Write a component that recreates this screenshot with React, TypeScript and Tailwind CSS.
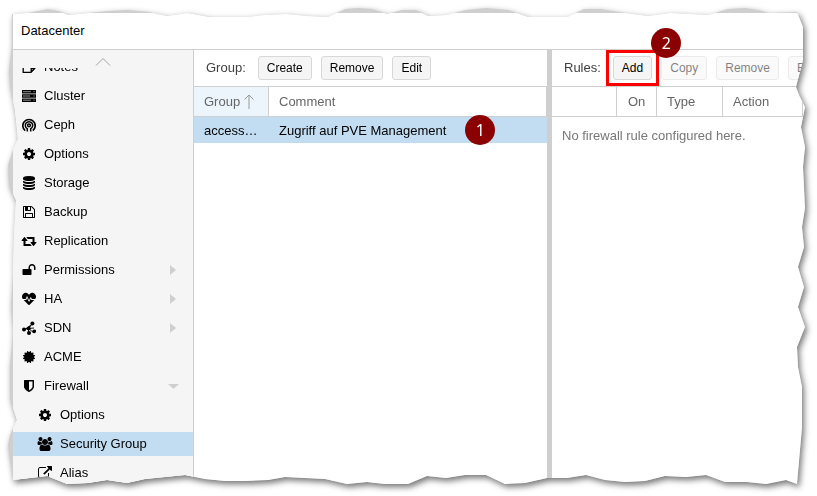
import React from 'react'
import { FaHeartbeat } from 'react-icons/fa'

type Point = [number, number]

// outline of the torn sheet, drawn on an 817 x 496 grid and scaled to the window
const tornEdge: Point[] = [
  [12, 14], [28, 13], [38, 11], [48, 9], [58, 11], [68, 15], [88, 13], [108, 11], [128, 10], [148, 12],
  [167, 16], [187, 13], [209, 17], [246, 17], [264, 15], [286, 14], [308, 16], [328, 17], [345, 9],
  [358, 8], [372, 9], [387, 14], [402, 10], [416, 10], [428, 16], [446, 15], [466, 10], [486, 8],
  [508, 10], [528, 17], [567, 17], [584, 9], [600, 9], [625, 13], [648, 16], [670, 13], [690, 14],
  [708, 15], [728, 9], [745, 8], [758, 10], [768, 13], [797, 12],
  [803, 27], [803, 60], [796, 87], [799, 95], [805, 107], [801, 127], [805, 147], [803, 167],
  [805, 208], [802, 227], [804, 247], [798, 267], [804, 287], [798, 307], [805, 327], [797, 347],
  [798, 367], [802, 387], [802, 427], [797, 484],
  [786, 480], [766, 484], [747, 482], [725, 482], [706, 475], [686, 477], [665, 476], [645, 481],
  [625, 482], [605, 480], [586, 475], [567, 478], [547, 478], [525, 483], [505, 484], [486, 475],
  [465, 475], [446, 478], [427, 476], [408, 484], [385, 484], [367, 482], [347, 484], [325, 479],
  [305, 478], [285, 477], [268, 480], [245, 481], [225, 481], [205, 479], [185, 475], [165, 477],
  [145, 479], [127, 483], [107, 480], [88, 483], [67, 484], [47, 476], [30, 478], [13, 480],
  [11, 465], [8, 445], [10, 435], [17, 420], [10, 398], [10, 365], [12, 345], [13, 330], [11, 305],
  [13, 275], [14, 235], [16, 200], [9, 185], [8, 165], [13, 150], [18, 139], [15, 110], [10, 85],
  [9, 70], [12, 45],
]

const sheetClip = `polygon(${tornEdge
  .map(([x, y]) => `${(x / 817) * 100}% ${(y / 496) * 100}%`)
  .join(', ')})`

const paths = {
  cog: 'M1152 896q0-106-75-181t-181-75-181 75-75 181 75 181 181 75 181-75 75-181zm512-109v222q0 12-8 23t-20 13l-185 28q-19 54-39 91 35 50 107 138 10 12 10 25t-9 23q-27 37-99 108t-94 71q-12 0-26-9l-138-108q-44 23-91 38-16 136-29 186-7 28-36 28h-222q-14 0-24.500-8.500t-11.500-21.500l-28-184q-49-16-90-37l-141 107q-10 9-25 9-14 0-25-11-126-114-165-168-7-10-7-23 0-12 8-23 15-21 51-66.500t54-70.500q-27-50-41-99l-183-27q-13-2-21-12.500t-8-23.500v-222q0-12 8-23t19-13l186-28q14-46 39-92-40-57-107-138-10-12-10-24 0-10 9-23 26-36 98.500-107.500t94.500-71.500q13 0 26 10l138 107q44-23 91-38 16-136 29-186 7-28 36-28h222q14 0 24.500 8.500t11.500 21.500l28 184q49 16 90 37l142-107q9-9 24-9 13 0 25 10 129 119 165 170 7 8 7 22 0 12-8 23-15 21-51 66.500t-54 70.500q26 50 41 98l183 28q13 2 21 12.500t8 23.500z',
  floppy: 'M512 1536h768v-384h-768v384zm896 0h128v-896q0-14-10-38.500t-20-34.500l-281-281q-10-10-34-20t-39-10v416q0 40-28 68t-68 28h-576q-40 0-68-28t-28-68v-416h-128v1280h128v-416q0-40 28-68t68-28h832q40 0 68 28t28 68v416zm-384-928v-320q0-13-9.500-22.500t-22.500-9.500h-192q-13 0-22.500 9.500t-9.500 22.500v320q0 13 9.500 22.500t22.500 9.500h192q13 0 22.500-9.500t9.500-22.500zm640 32v928q0 40-28 68t-68 28h-1344q-40 0-68-28t-28-68v-1344q0-40 28-68t68-28h928q40 0 88 20t76 48l280 280q28 28 48 76t20 88z',
  database: 'M896 768q237 0 443-43t325-127v170q0 69-103 128t-280 93.500-385 34.500-385-34.500-280-93.500-103-128v-170q119 84 325 127t443 43zm0 768q237 0 443-43t325-127v170q0 69-103 128t-280 93.500-385 34.500-385-34.500-280-93.500-103-128v-170q119 84 325 127t443 43zm0-384q237 0 443-43t325-127v170q0 69-103 128t-280 93.500-385 34.500-385-34.500-280-93.500-103-128v-170q119 84 325 127t443 43zm0-1152q208 0 385 34.500t280 93.500 103 128v128q0 69-103 128t-280 93.500-385 34.500-385-34.500-280-93.500-103-128v-128q0-69 103-128t280-93.500 385-34.500z',
  unlock: 'M1728 576v256q0 26-19 45t-45 19h-64q-26 0-45-19t-19-45v-256q0-106-75-181t-181-75-181 75-75 181v192h96q40 0 68 28t28 68v576q0 40-28 68t-68 28h-960q-40 0-68-28t-28-68v-576q0-40 28-68t68-28h672v-192q0-185 131.500-316.500t316.500-131.500 316.500 131.500 131.500 316.500z',
  retweet: 'M1344 1504q0 13-9.500 22.500t-22.500 9.500h-960q-8 0-13.500-2t-9-7-5.500-8-3-11.500-1-11.500v-600h-192q-26 0-45-19t-19-45q0-24 15-41l320-384q19-22 49-22t49 22l320 384q15 17 15 41 0 26-19 45t-45 19h-192v384h576q16 0 25 11l160 192q7 10 7 21zm640-416q0 24-15 41l-320 384q-20 23-49 23t-49-23l-320-384q-15-17-15-41 0-26 19-45t45-19h192v-384h-576q-16 0-25-12l-160-192q-7-9-7-20 0-13 9.500-22.500t22.500-9.500h960q8 0 13.500 2t9 7 5.500 8 3 11.500 1 11.500v600h192q26 0 45 19t19 45z',
  shield: 'M1344 960v-640h-448v1137q119-63 213-137 235-184 235-360zm192-768v768q0 86-33.500 170.500t-83 150-118 127.500-126.500 103-121 77.500-89.500 49.500-42.500 20q-12 6-26 6t-26-6q-16-7-42.500-20t-89.500-49.500-121-77.500-126.500-103-118-127.500-83-150-33.500-170.500v-768q0-26 19-45t45-19h1152q26 0 45 19t19 45z',
  certificate: 'M1504 896l138 135q30 28 20 70-12 41-52 51l-188 48 53 186q12 41-19 70-29 31-70 19l-186-53-48 188q-10 40-51 52-12 2-19 2-31 0-51-22l-135-138-135 138q-28 30-70 20-41-11-51-52l-48-188-186 53q-41 12-70-19-31-29-19-70l53-186-188-48q-40-10-52-51-10-42 20-70l138-135-138-135q-30-28-20-70 12-41 52-51l188-48-53-186q-12-41 19-70 29-31 70-19l186 53 48-188q10-41 51-51 41-12 70 19l135 139 135-139q29-30 70-19 41 10 51 51l48 188 186-53q41-12 70 19 31 29 19 70l-53 186 188 48q40 10 52 51 10 42-20 70z',
  external: 'M1408 928v320q0 119-84.500 203.500t-203.500 84.500h-832q-119 0-203.500-84.500t-84.500-203.500v-832q0-119 84.500-203.500t203.500-84.500h704q14 0 23 9t9 23v64q0 14-9 23t-23 9h-704q-66 0-113 47t-47 113v832q0 66 47 113t113 47h832q66 0 113-47t47-113v-320q0-14 9-23t23-9h64q14 0 23 9t9 23zm384-864v512q0 26-19 45t-45 19-45-19l-176-176-652 652q-10 10-23 10t-23-10l-114-114q-10-10-10-23t10-23l652-652-176-176q-19-19-19-45t19-45 45-19h512q26 0 45 19t19 45z',
  users: 'M657 896q-162 5-265 128h-134q-82 0-138-40.500t-56-118.500q0-353 124-353 6 0 43.500 21t97.500 42.500 119 21.500q67 0 133-23-5 37-5 66 0 139 81 256zm1071 637q0 120-73 189.500t-194 69.500h-874q-121 0-194-69.500t-73-189.500q0-53 3.500-103.500t14-109 26.500-108.500 43-97.500 62-81 85.500-53.500 111.500-20q10 0 43 21.500t73 48 107 48 135 21.500 135-21.500 107-48 73-48 43-21.500q61 0 111.500 20t85.500 53.500 62 81 43 97.500 26.500 108.500 14 109 3.500 103.500zm-1024-1277q0 106-75 181t-181 75-181-75-75-181 75-181 181-75 181 75 75 181zm704 384q0 159-112.500 271.500t-271.500 112.500-271.500-112.500-112.500-271.500 112.500-271.500 271.500-112.500 271.500 112.500 112.500 271.500zm576 225q0 78-56 118.500t-138 40.500h-134q-103-123-265-128 81-117 81-256 0-29-5-66 66 23 133 23 59 0 119-21.500t97.500-42.500 43.500-21q124 0 124 353zm-128-609q0 106-75 181t-181 75-181-75-75-181 75-181 181-75 181 75 75 181z',
}

const Glyph: React.FC<{ d: string; wide?: boolean }> = ({ d, wide }) => (
  <svg
    viewBox={wide ? '0 0 2048 1792' : '0 0 1792 1792'}
    className={wide ? 'w-4 h-3.5' : 'w-3.5 h-3.5'}
    fill="currentColor"
    aria-hidden="true"
  >
    <path d={d} />
  </svg>
)

const NoteIcon = () => (
  <svg viewBox="0 0 14 14" className="w-3.5 h-3.5" fill="none" stroke="currentColor" strokeWidth="1.3" aria-hidden="true">
    <path d="M1.200 1.700h11.600v6.800l-3.800 3.800H1.200z M12.800 8.700H9.200v3.500" />
  </svg>
)

const ServerIcon = () => (
  <svg viewBox="0 0 14 12" className="w-3.5 h-3" aria-hidden="true">
    <path d="M0 0h14v3.400H0zM0 4.200h14v3.500H0zM0 8.500h14v3.500H0z" fill="currentColor" />
    <path d="M1 1.700h8M11.500 1.700h1.200M1 6h7M11.500 6h1.200M1 10.200h8M11.500 10.200h1.200" stroke="#f5f5f5" strokeWidth="0.600" />
  </svg>
)

const CephIcon = () => (
  <svg viewBox="0 0 14 14" className="w-3.5 h-3.5" fill="none" stroke="currentColor" aria-hidden="true">
    <path d="M3.200 12.600A6.200 6.200 0 1 1 10.800 12.600" strokeWidth="1.700" />
    <path d="M5.300 13.600v-2.900A3.700 3.700 0 1 1 8.700 10.700v2.900" strokeWidth="1.500" />
    <circle cx="7" cy="7.300" r="1.400" strokeWidth="1.500" />
  </svg>
)

const SdnIcon = () => (
  <svg viewBox="0 0 14 14" className="w-3.5 h-3.5" fill="currentColor" stroke="currentColor" aria-hidden="true">
    <path d="M2 8.500L6.500 7.500L10.500 2.500M6.500 7.500L12 7M6.500 7.500L11.500 11.500M6.500 7.500v5" strokeWidth="0.900" />
    <g stroke="none">
      <circle cx="2" cy="8.400" r="2" />
      <circle cx="6.700" cy="7.400" r="2" />
      <circle cx="10.400" cy="2.400" r="2" />
      <circle cx="12.200" cy="10.300" r="1.900" />
      <circle cx="7" cy="12" r="2" />
    </g>
  </svg>
)

interface NavItem {
  label: string
  icon: React.ReactNode
  child?: boolean
  arrow?: 'right' | 'down'
  active?: boolean
}

const navItems: NavItem[] = [
  { label: 'Notes', icon: <NoteIcon /> },
  { label: 'Cluster', icon: <ServerIcon /> },
  { label: 'Ceph', icon: <CephIcon /> },
  { label: 'Options', icon: <Glyph d={paths.cog} /> },
  { label: 'Storage', icon: <Glyph d={paths.database} /> },
  { label: 'Backup', icon: <Glyph d={paths.floppy} /> },
  { label: 'Replication', icon: <Glyph d={paths.retweet} wide /> },
  { label: 'Permissions', icon: <Glyph d={paths.unlock} />, arrow: 'right' },
  { label: 'HA', icon: <FaHeartbeat className="w-3.5 h-3.5" />, arrow: 'right' },
  { label: 'SDN', icon: <SdnIcon />, arrow: 'right' },
  { label: 'ACME', icon: <Glyph d={paths.certificate} /> },
  { label: 'Firewall', icon: <Glyph d={paths.shield} />, arrow: 'down' },
  { label: 'Options', icon: <Glyph d={paths.cog} />, child: true },
  { label: 'Security Group', icon: <Glyph d={paths.users} wide />, child: true, active: true },
  { label: 'Alias', icon: <Glyph d={paths.external} />, child: true },
]

const Arrow: React.FC<{ dir: 'right' | 'down' }> = ({ dir }) => (
  <svg viewBox="0 0 12 12" className="w-3 h-3 ml-auto text-[#cfcfcf]" fill="currentColor" aria-hidden="true">
    {dir === 'right' ? <path d="M3 1l6 5-6 5z" /> : <path d="M1 4h11l-5.500 5z" />}
  </svg>
)

const Sidebar: React.FC = () => (
  <nav aria-label="Datacenter" className="w-[181px] shrink-0 bg-[#f5f5f5] border-r border-[#cfcfcf] flex flex-col">
    <button type="button" aria-label="Scroll up" className="h-[18px] w-full flex justify-center items-end pb-0.5">
      <svg viewBox="0 0 16 9" className="w-4 h-[9px] text-[#a0a0a0]" fill="none" stroke="currentColor" aria-hidden="true">
        <path d="M1 8.500l7-7 7 7" />
      </svg>
    </button>
    {/* the list is scrolled down a little, so its first row is partly hidden */}
    <div className="overflow-hidden">
      <ul className="-mt-[13px] flex flex-col gap-[5px]">
        {navItems.map((item, i) => (
          <li key={i}>
            <a
              href="#"
              className={`h-6 flex items-center pr-3.5 ${item.child ? 'pl-6' : 'pl-2'} ${item.active ? 'bg-[#c2ddf2]' : ''}`}
            >
              <span className="w-4 mr-[7px] flex justify-center">{item.icon}</span>
              <span>{item.label}</span>
              {item.arrow && <Arrow dir={item.arrow} />}
            </a>
          </li>
        ))}
      </ul>
    </div>
  </nav>
)

const ToolButton: React.FC<{ label: string; disabled?: boolean }> = ({ label, disabled }) => (
  <button
    type="button"
    disabled={disabled}
    className="h-6 px-2 shrink-0 border border-[#d8d8d8] rounded-[3px] bg-[#f5f5f5] text-xs text-black disabled:opacity-50"
  >
    {label}
  </button>
)

const Badge: React.FC<{ n: number; place: string }> = ({ n, place }) => (
  <span
    className={`absolute ${place} z-10 w-[30px] h-[30px] rounded-full bg-[#8b0000] text-white text-base font-['Noto_Sans',sans-serif] flex items-center justify-center`}
  >
    {n}
  </span>
)

const GroupPanel: React.FC = () => (
  <section className="flex-[353_1_0] min-w-0">
    <div className="h-[37px] pl-3 flex items-center gap-[9px] border-b border-[#cfcfcf]">
      <span className="mr-[3px] text-[#404040]">Group:</span>
      <ToolButton label="Create" />
      <ToolButton label="Remove" />
      <ToolButton label="Edit" />
    </div>
    <table className="w-full table-fixed border-separate border-spacing-0 text-left">
      <thead>
        <tr className="h-[30px] text-[#666]">
          <th scope="col" aria-sort="ascending" className="w-[75px] pl-2.5 font-normal bg-[#ecf5fc] border-r border-b border-[#cfcfcf]">
            <span className="flex items-center gap-1">
              Group
              <svg viewBox="0 0 10 15" className="w-2.5 h-[15px] text-[#999]" fill="none" stroke="currentColor" aria-hidden="true">
                <path d="M5 15V1M.500 5.500L5 1l4.500 4.500" />
              </svg>
            </span>
          </th>
          <th scope="col" className="pl-2.5 font-normal border-r border-b border-[#cfcfcf]">Comment</th>
        </tr>
      </thead>
      <tbody>
        <tr className="h-[26px] bg-[#c2ddf2]">
          <td className="pl-2.5 pt-0.5">access…</td>
          <td className="pl-2.5 pt-0.5">
            <span className="relative whitespace-nowrap">
              Zugriff auf PVE Management
              <Badge n={1} place="left-full ml-[19px] -top-2" />
            </span>
          </td>
        </tr>
      </tbody>
    </table>
  </section>
)

const RulesPanel: React.FC = () => (
  <section className="flex-[265_1_0] min-w-0">
    <div className="h-[37px] pl-3 flex items-center gap-[9px] border-b border-[#cfcfcf]">
      <span className="mr-[3px] text-[#404040]">Rules:</span>
      <span className="relative flex shrink-0">
        <ToolButton label="Add" />
        <span className="absolute -inset-x-[7px] -inset-y-[6px] border-3 border-[#f00] pointer-events-none" />
        <Badge n={2} place="left-full -ml-px -top-7" />
      </span>
      <ToolButton label="Copy" disabled />
      <ToolButton label="Remove" disabled />
      <ToolButton label="Edit" disabled />
    </div>
    <table className="w-full table-fixed border-separate border-spacing-0 text-left">
      <thead>
        <tr className="h-[30px] text-[#666]">
          <th className="w-[65px] border-r border-b border-[#cfcfcf]" />
          <th scope="col" className="w-10 pl-[11px] font-normal border-r border-b border-[#cfcfcf]">On</th>
          <th scope="col" className="w-[66px] pl-2.5 font-normal border-r border-b border-[#cfcfcf]">Type</th>
          <th scope="col" className="w-20 pl-2.5 font-normal border-r border-b border-[#cfcfcf]">Action</th>
          <th className="border-b border-[#cfcfcf]" />
        </tr>
      </thead>
      <tbody>
        <tr>
          <td colSpan={5} className="px-2.5 pt-[11px] text-[#777]">No firewall rule configured here.</td>
        </tr>
      </tbody>
    </table>
  </section>
)

const App: React.FC = () => (
  <div className="h-screen overflow-hidden bg-white">
    <div className="h-full drop-shadow-[2px_3px_3px_rgba(0,0,0,0.55)]">
      <div
        className="h-full pl-[13px] pt-[13px] bg-[#cfcfcf] overflow-hidden font-['Liberation_Sans',Arial,sans-serif] text-[13px] leading-4 text-black"
        style={{ clipPath: sheetClip }}
      >
        <div className="h-full flex flex-col bg-white">
          <h1 className="h-[37px] shrink-0 pl-2 flex items-center border-b border-[#cfcfcf]">Datacenter</h1>
          <div className="flex flex-1 min-h-0">
            <Sidebar />
            <main className="flex flex-1 min-w-0">
              <GroupPanel />
              <div role="separator" className="w-[5px] shrink-0 bg-[#cfcfcf]" />
              <RulesPanel />
            </main>
          </div>
        </div>
      </div>
    </div>
  </div>
)

export default App
